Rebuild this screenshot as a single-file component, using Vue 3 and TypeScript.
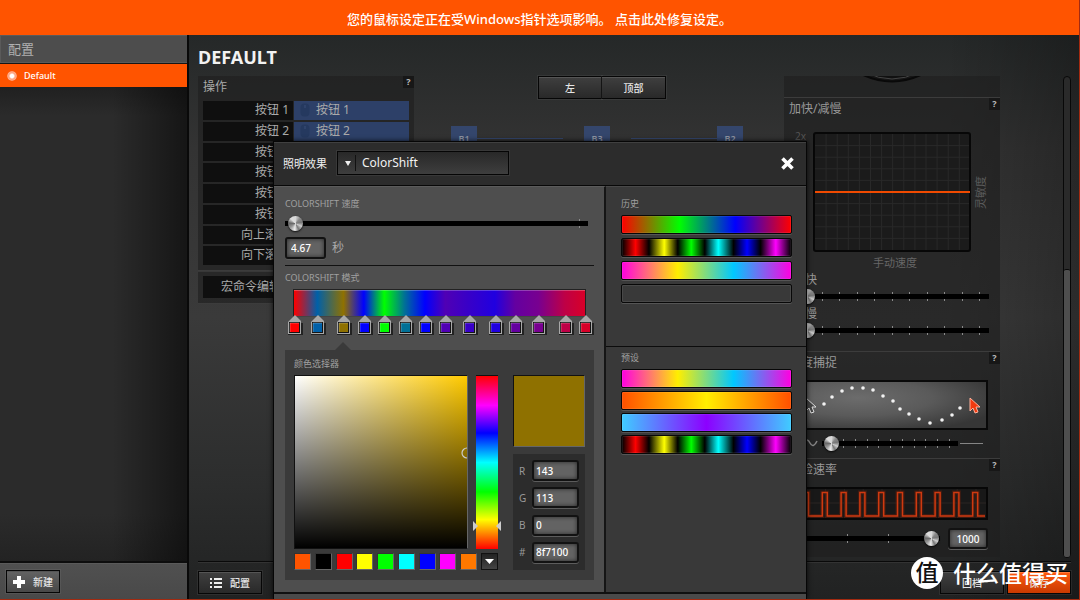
<script setup lang="ts">
import { ref } from 'vue'

interface Binding { label: string; value: string }
interface Stop { at: number; color: string }

const bindings: Binding[] = [
  { label: '按钮 1', value: '按钮 1' },
  { label: '按钮 2', value: '按钮 2' },
  { label: '按钮 3', value: '按钮 3' },
  { label: '按钮 4', value: '按钮 4' },
  { label: '按钮 5', value: '按钮 5' },
  { label: '按钮 6', value: 'CPI 切换' },
  { label: '向上滚动', value: '向上滚动' },
  { label: '向下滚动', value: '向下滚动' },
]

const stops: Stop[] = [
  { at: 0, color: '#ff0000' },
  { at: 8, color: '#0060a8' },
  { at: 17, color: '#8f7100' },
  { at: 24, color: '#0000ff' },
  { at: 31, color: '#00ff00' },
  { at: 38, color: '#007096' },
  { at: 45, color: '#0000ff' },
  { at: 52, color: '#5000b4' },
  { at: 60, color: '#3800c8' },
  { at: 69, color: '#2000e0' },
  { at: 76, color: '#6400a0' },
  { at: 84, color: '#780090' },
  { at: 93, color: '#be0046' },
  { at: 100, color: '#d80028' },
]
const pattern = `linear-gradient(90deg, ${stops.map(s => `${s.color} ${s.at}%`).join(', ')})`

const spectrum = 'linear-gradient(90deg, #ff0000, #00ff00 34%, #0000ff 67%, #ff0000)'
const pulses = 'linear-gradient(90deg, #000, #f00 8%, #000 16%, #ff0 25%, #000 33%, #0f0 41%, #000 49%, #0ff 57%, #000 66%, #00f 74%, #000 82%, #f0f 91%, #000)'
const candy = 'linear-gradient(90deg, #ff00e0, #ffee00 33%, #00c8ff 66%, #ff00e0)'
const sunset = 'linear-gradient(90deg, #ff5000, #ffee00 50%, #ff5000)'
const ocean = 'linear-gradient(90deg, #40ccff, #8c00ff 50%, #40ccff)'
const history = [spectrum, pulses, candy, 'none']
const presets = [candy, sunset, ocean, pulses]

const swatches = ['#ff5400', '#000000', '#ff0000', '#ffff00', '#00ff00', '#00ffff', '#0000ff', '#ff00ff', '#ff7800']

const dots = [
  [36, 24], [44, 17], [54, 11], [64, 8], [75, 8], [85, 10], [95, 16], [105, 21],
  [112, 29], [121, 34], [131, 39], [142, 43], [154, 40], [164, 35], [172, 28],
]
const wave = 'M2 29' + Array.from({ length: 10 }, (_, i) => {
  const x = 15.5 + i * 18.8
  return `H${x}V5.5H${x + 5}V29`
}).join('') + 'H197'

const speed = ref(1)
const seconds = ref('4.67')
const accel = ref(0)
const decel = ref(0)
const snap = ref(2)
const polling = ref(99)
const pollingRate = ref('1000')
const channels = ref([
  { name: 'R', value: '143' },
  { name: 'G', value: '113' },
  { name: 'B', value: '0' },
  { name: '#', value: '8f7100' },
])
</script>

<template>
  <div class="app">
    <button class="banner">您的鼠标设定正在受Windows指针选项影响。 点击此处修复设定。</button>

    <div class="body">
      <aside class="sidebar">
        <h2 class="side-title">配置</h2>
        <button class="profile"><span class="radio-dot"></span>Default</button>
        <div class="side-space"></div>
        <div class="side-foot">
          <button class="btn new-btn">
            <svg width="12" height="12" viewBox="0 0 12 12"><path d="M4 0h4v4h4v4H8v4H4V8H0V4h4z" fill="#fff" /></svg>新建
          </button>
        </div>
      </aside>

      <main class="main">
        <h1>DEFAULT</h1>
        <div class="columns">
          <section class="actions">
            <div class="panel">
              <div class="panel-head"><h3>操作</h3><button class="help">?</button></div>
              <div class="bindings">
                <div v-for="b in bindings" :key="b.label" class="binding">
                  <span class="binding-name">{{ b.label }}</span>
                  <button class="binding-value">
                    <svg width="10" height="14" viewBox="0 0 10 14"><rect x="0.5" y="0.5" width="9" height="13" rx="4" fill="#25395f" /><path d="M5 2v3" stroke="#3a4e78" /></svg>{{ b.value }}
                  </button>
                </div>
              </div>
            </div>
            <div class="panel macro"><button>宏命令编辑器</button></div>
          </section>

          <section class="device">
            <div class="views"><button class="btn">左</button><button class="btn">顶部</button></div>
            <div class="callouts">
              <span class="tag">B1</span><i class="lead"></i><span class="gap"></span>
              <span class="tag">B3</span><span class="gap"></span><i class="lead"></i><span class="tag">B2</span>
            </div>
          </section>

          <section class="settings">
            <div class="panel dial">
              <svg width="72" height="8" viewBox="0 0 72 8"><path d="M5-2Q36 13 67-2" fill="#161616" stroke="#090909" stroke-width="2" /><path d="M9-4Q36 10 63-4" fill="#111" stroke="#444" /></svg>
            </div>
            <div class="panel accel">
              <div class="panel-head"><h3>加快/减慢</h3><button class="help">?</button></div>
              <div class="chart-row">
                <span class="scale">2x</span>
                <svg class="chart" width="158" height="120" viewBox="0 0 158 120">
                  <rect x="1" y="1" width="156" height="118" rx="2" fill="#1b1b1b" stroke="#070707" stroke-width="2" />
                  <path v-for="i in 13" :key="'v' + i" :d="`M${i * 11.1 + 2} 2V118`" stroke="#292929" />
                  <path v-for="i in 9" :key="'h' + i" :d="`M2 ${i * 11.6 + 2}H156`" stroke="#292929" />
                  <path d="M2 60H157" stroke="#f04a00" stroke-width="2" />
                </svg>
                <span class="axis-y">灵敏度</span>
              </div>
              <p class="axis-x">手动速度</p>
              <label for="accel">加快</label>
              <div class="slider ten"><div class="ticks"><i v-for="i in 10" :key="i"></i></div><input id="accel" v-model="accel" type="range"></div>
              <label for="decel">减慢</label>
              <div class="slider ten"><div class="ticks"><i v-for="i in 10" :key="i"></i></div><input id="decel" v-model="decel" type="range"></div>
            </div>
            <div class="panel snap">
              <div class="panel-head"><h3><label for="snap">角度捕捉</label></h3><button class="help">?</button></div>
              <svg class="snap-art" width="200" height="50" viewBox="0 0 200 50">
                <defs><radialGradient id="snapGlow" cx="35%" cy="35%" r="75%"><stop offset="0" stop-color="#6c6c6c" /><stop offset="0.5" stop-color="#5a5a5a" /><stop offset="1" stop-color="#363636" /></radialGradient></defs>
                <rect x="1" y="1" width="198" height="48" fill="url(#snapGlow)" stroke="#090909" stroke-width="2" />
                <circle v-for="(d, i) in dots" :key="i" :cx="d[0]" :cy="d[1]" r="1.8" fill="#f2f2f2" />
                <path d="M18 18v13l3-3 2 5 3-1-2-5h4z" fill="#444" stroke="#ddd" />
                <path d="M182 18v13l3-3 2 5 3-1-2-5h4z" fill="#f23a10" stroke="#ffb29c" />
              </svg>
              <div class="snap-row">
                <svg width="30" height="8" viewBox="0 0 30 8"><path d="M2 4Q5-2 8 4T14 4T20 4T27 2" fill="none" stroke="#858585" stroke-width="1.5" /></svg>
                <div class="slider"><div class="ticks"><i v-for="i in 10" :key="i"></i></div><input id="snap" v-model="snap" type="range"></div>
                <span class="flat"></span>
              </div>
            </div>
            <div class="panel poll">
              <div class="panel-head"><h3><label for="poll">巡检速率</label></h3><button class="help">?</button></div>
              <svg class="poll-art" width="200" height="33" viewBox="0 0 200 33">
                <rect x="1" y="1" width="198" height="31" fill="#181818" stroke="#070707" stroke-width="2" />
                <path v-for="i in 10" :key="i" :d="`M${i * 18.8} 2V31`" stroke="#2b2422" />
                <path d="M2 16H198" stroke="#2b2422" />
                <path :d="wave" fill="none" stroke="#5c1e0c" stroke-width="4" opacity="0.55" />
                <path :d="wave" fill="none" stroke="#cf3a10" stroke-width="1.5" />
              </svg>
              <div class="poll-row">
                <div class="slider"><div class="ticks"><i v-for="i in 3" :key="i"></i></div><input id="poll" v-model="polling" type="range"></div>
                <input v-model="pollingRate" class="field" aria-label="巡检速率">
              </div>
            </div>
          </section>
          <div class="scroll"><div class="scroll-thumb"></div></div>
        </div>
        <footer class="main-foot">
          <button class="btn">
            <svg width="12" height="10" viewBox="0 0 12 10"><path d="M0 1h2M0 5h2M0 9h2M4 1h8M4 5h8M4 9h8" stroke="#eee" stroke-width="2" /></svg>配置
          </button>
          <span class="gap"></span>
          <button class="btn revert">回档</button>
          <button class="btn save">保存</button>
        </footer>
      </main>
    </div>

    <div class="overlay">
      <div class="dialog" role="dialog" aria-label="照明效果">
        <header class="dialog-head">
          <label for="effect">照明效果</label>
          <div class="effect">
            <select id="effect"><option>ColorShift</option></select>
            <span class="effect-arrow"><svg width="6" height="5" viewBox="0 0 6 5"><path d="M0 0h6L3 5z" fill="#eee" /></svg></span>
          </div>
          <span class="gap"></span>
          <button class="close" aria-label="关闭">
            <svg width="13" height="13" viewBox="0 0 13 13"><path d="M1.5 1.5l10 10M11.5 1.5l-10 10" stroke="#fff" stroke-width="3.6" /></svg>
          </button>
        </header>
        <div class="dialog-body">
          <section class="editor">
            <label class="caption" for="speed">COLORSHIFT 速度</label>
            <div class="slider speed"><div class="ticks"><i></i></div><input id="speed" v-model="speed" type="range"></div>
            <div class="seconds"><input id="seconds" v-model="seconds" class="field"><label for="seconds">秒</label></div>
            <h4 class="caption mode">COLORSHIFT 模式</h4>
            <div class="pattern" :style="{ backgroundImage: pattern }">
              <button v-for="(s, i) in stops" :key="i" class="stop" :style="{ left: s.at + '%' }" :aria-label="s.color">
                <svg width="18" height="22" viewBox="0 0 18 22">
                  <path d="M2 8h15v12H2z" fill="#222" />
                  <path d="M9 0l6 6v13H2V7z" fill="#a8a8a8" />
                  <path d="M3 7h11v11H3z" fill="#151515" />
                  <path d="M4 8h9v9H4z" :fill="s.color" />
                  <path d="M4 17V8h9" fill="none" stroke="#fff" stroke-opacity="0.3" />
                </svg>
              </button>
            </div>
            <div class="picker">
              <h4 class="caption">颜色选择器</h4>
              <div class="picker-grid">
                <div class="sv"><svg class="sv-mark" width="6" height="12" viewBox="0 0 6 12"><path d="M6 1A5 5 0 0 0 6 11" fill="none" stroke="#ccc" stroke-width="1.2" /></svg></div>
                <div class="hue">
                  <svg class="hue-mark" width="28" height="10" viewBox="0 0 28 10"><path d="M0 0l5 5-5 5zM28 0l-5 5 5 5z" fill="#ccc" /></svg>
                </div>
                <div class="side">
                  <div class="preview"></div>
                  <div class="channels">
                    <template v-for="c in channels" :key="c.name">
                      <label :for="'ch' + c.name">{{ c.name }}</label>
                      <input :id="'ch' + c.name" v-model="c.value" class="field">
                    </template>
                  </div>
                </div>
                <div class="swatches">
                  <button v-for="c in swatches" :key="c" class="swatch" :style="{ backgroundColor: c }" :aria-label="c"></button>
                  <button class="swatch more" aria-label="更多"><svg width="9" height="5" viewBox="0 0 9 5"><path d="M0 0h9L4.500 5z" fill="#fff" /></svg></button>
                </div>
              </div>
            </div>
          </section>
          <section class="library">
            <div class="lib-group">
              <h4 class="caption">历史</h4>
              <button v-for="(g, i) in history" :key="i" class="gradient" :style="{ backgroundImage: g }" :aria-label="'历史 ' + (i + 1)"></button>
            </div>
            <div class="lib-group">
              <h4 class="caption">预设</h4>
              <button v-for="(g, i) in presets" :key="i" class="gradient" :style="{ backgroundImage: g }" :aria-label="'预设 ' + (i + 1)"></button>
            </div>
          </section>
        </div>
        <div class="dialog-foot"></div>
      </div>
    </div>

    <div class="watermark"><span class="wm-mark">值</span><span>什么值得买</span></div>
  </div>
</template>

<style>
body { margin: 0; background: #222; }
</style>

<style scoped>
.app, .app * { box-sizing: border-box; }
.app {
  position: relative; height: 100vh; overflow: hidden; display: flex; flex-direction: column;
  font: 12px/16px "Noto Sans", "Noto Sans CJK SC", sans-serif; color: #aaa;
  border-right: 1px solid #a32a10; border-bottom: 1px solid #a32a10;
}
h1, h2, h3, h4, p { margin: 0; font: inherit; }
button, input, select { font: inherit; color: inherit; margin: 0; padding: 0; border: 0; background: none; }
svg { display: block; flex: none; }
i { display: block; }
.gap { flex: 1; }

.banner { flex: none; height: 35px; background: #ff5400; color: #fff; font-size: 13px; font-weight: 500; padding-top: 2px; }
.body { flex: 1; min-height: 0; display: grid; grid-template-columns: 189px 1fr; }

.sidebar { display: flex; flex-direction: column; border-right: 2px solid #090909; min-height: 0; }
.side-title { height: 28px; padding: 5px 7px 0; background: #4d4d4d; border: 1px solid #5a5a5a; border-width: 1px 0 1px 1px; font-size: 13px; color: #b0b0b0; line-height: 16px; }
.profile { height: 24px; display: flex; align-items: center; gap: 7px; padding-left: 7px; border-top: 1px solid #161616; background: #ff5400; color: #fff; font-size: 9px; font-weight: 500; }
.radio-dot { width: 10px; height: 10px; border-radius: 50%; background: radial-gradient(circle, #fff 0 25%, #ff9d78 45%, #ffb090 60%, #ff6a24 75%); }
.side-space { flex: 1; background: linear-gradient(90deg, transparent 60%, rgba(0,0,0,.5)), linear-gradient(#202020, #2b2b2b 6%, #2b2b2b 90%, #232323); border-bottom: 2px solid #0d0d0d; }
.side-foot { height: 36px; padding: 6px 6px; background: linear-gradient(#505050, #494949); border-top: 1px solid #5a5a5a; }

.btn {
  height: 23px; display: flex; align-items: center; justify-content: center; gap: 8px;
  border: 1px solid #060606; outline: 1px solid rgba(255,255,255,.06);
  background: linear-gradient(#3f3f3f, #292929); box-shadow: inset 0 1px 0 #555;
  font-size: 10px; font-weight: 500; color: #e6e6e6;
}
.new-btn { width: 54px; background: linear-gradient(#636363, #484848); }

.main {
  min-width: 0; min-height: 0; display: flex; flex-direction: column; padding: 0 8px 0 9px;
  background: linear-gradient(90deg, transparent 85%, rgba(0,0,0,.25)), linear-gradient(#252828, #333 20%, #3a3a3a 50%, #2c2d2d 80%, #212222);
}
h1 { flex: none; height: 41px; padding-top: 11px; font-size: 18px; line-height: 22px; font-weight: 700; color: #f2f2f2; }
.columns { flex: 1; min-height: 0; display: grid; grid-template-columns: 216px 1fr 216px 71px; }
.panel { background: rgba(30,30,30,.62); border-bottom: 1px solid #3c3c3c; }
.panel-head { display: flex; justify-content: space-between; height: 22px; padding-left: 5px; }
.panel-head h3 { padding-top: 3px; font-size: 12px; }
.help { width: 11px; height: 12px; background: #171717; color: #bbb; font-size: 9px; line-height: 12px; font-weight: 700; }

.actions { min-width: 0; }
.actions .panel:first-child { height: 195px; margin-bottom: 1px; }
.bindings { display: grid; grid-auto-rows: 1fr; gap: 2px; height: 164px; margin: 3px 5px 0; }
.binding { display: grid; grid-template-columns: 90px 1fr; gap: 1px; line-height: 16px; }
.binding-name { background: #0f0f0f; text-align: right; padding: 1px 4px 0 0; }
.binding-value { display: flex; align-items: center; gap: 6px; padding-left: 6px; background: #2d4068; }
.macro { padding: 4px 5px 5px; }
.macro button { display: block; width: 100%; height: 22px; background: #0f0f0f; text-align: left; padding-left: 18px; }

.device { min-width: 0; }
.views { display: flex; justify-content: center; padding-left: 6px; }
.views .btn { flex: 0 1 64px; }
.views .btn + .btn { border-left: 0; }
.callouts { display: flex; margin: 27px 41px 0 37px; }
.tag { width: 26px; height: 26px; background: #34466c; color: #8f95a3; font-size: 9px; line-height: 26px; text-align: center; font-weight: 600; }
.lead { width: 86px; height: 1px; margin-top: 12px; background: #34466c; }

.settings { min-width: 0; color: #999; }
.dial { height: 22px; display: flex; justify-content: center; }
.accel { height: 254px; }
.chart-row { display: grid; grid-template-columns: 22px 158px 1fr; gap: 7px; margin-top: 12px; align-items: center; }
.scale { align-self: start; text-align: right; font-size: 10px; line-height: 8px; color: #555; }
.axis-y { writing-mode: vertical-rl; text-orientation: sideways; transform: rotate(180deg); color: #5c5c5c; width: 16px; line-height: 16px; justify-self: start; margin-left: -5px; font-size: 11px; }
.axis-x { text-align: center; font-size: 11px; line-height: 14px; padding: 4px 0 2px 6px; color: #666; }
.accel > label { display: block; line-height: 16px; padding-left: 9px; font-size: 12px; }
.accel .slider { margin: 0 11px 2px 16px; }
.snap { height: 107px; }
.snap-art, .poll-art { margin: 6px 0 0 4px; }
.snap-row { display: grid; grid-template-columns: 30px 136px 23px; gap: 2px; align-items: center; margin: 5px 0 0 6px; }
.flat { height: 1px; background: #858585; }
.poll { height: 98px; border: 0; }
.poll-row { display: flex; align-items: center; gap: 8px; margin: 8px 12px 0 12px; }
.poll-row .slider { flex: 1; }
.poll-row .field { width: 40px; text-align: center; padding: 0; }

.scroll { justify-self: end; width: 8px; border: 1px solid #080808; border-radius: 4px; background: #2a2a2a; display: flex; flex-direction: column; justify-content: flex-end; }
.scroll-thumb { height: 60%; border-top: 1px solid #080808; background: #4e4e4e; border-radius: 2px; }

.main-foot { flex: none; display: flex; gap: 3px; height: 38px; margin-top: 3px; padding-top: 9px; border-top: 1px solid #090909; box-shadow: inset 0 1px 0 #333; }
.main-foot .btn { width: 64px; }
.main-foot .save { background: linear-gradient(#ff5a10, #c93a00); box-shadow: inset 0 1px 0 #ff7a3a; }

.slider { display: grid; align-items: center; height: 16px; }
.slider > * { grid-area: 1 / 1; min-width: 0; }
.slider input { appearance: none; width: 100%; height: 16px; background: linear-gradient(#000, #000) center / 100% 5px no-repeat; }
.slider input::-webkit-slider-thumb {
  appearance: none; width: 15px; height: 15px; border-radius: 50%;
  background: conic-gradient(#d8d8d8, #888 12%, #777 22%, #ccc 32%, #777 42%, #eee 52%, #999 64%, #666 76%, #ddd 88%, #d8d8d8);
  box-shadow: 0 1px 2px rgba(0,0,0,.8);
}
.ticks { display: flex; justify-content: space-between; height: 9px; }
.ticks i { width: 1px; height: 9px; background: #8a8a8a; }
.ten .ticks { padding: 0 9px 0 22px; }
.snap-row .ticks { padding: 0 8px 0 21px; }
.poll-row .ticks { padding: 0 51px 0 9px; }
.speed .ticks { padding-right: 8px; justify-content: flex-end; }

.field {
  width: 46px; height: 21px; padding: 0 0 0 4px; border: 2px solid #121212; border-radius: 3px;
  background: #636363; box-shadow: inset 0 0 4px rgba(0,0,0,.6), 0 1px 0 #5c5c5c;
  color: #fff; font-size: 10px; font-weight: 500;
}

.overlay { position: absolute; inset: 141px -1px 0 0; display: flex; justify-content: center; }
.dialog { width: 534px; max-width: 100%; display: flex; flex-direction: column; border: 1px solid #060606; border-bottom: 0; background: #2c2c2c; box-shadow: 0 0 5px rgba(0,0,0,.8); }
.dialog-head { flex: none; height: 44px; display: flex; align-items: center; gap: 10px; padding: 0 12px 0 9px; color: #f0f0f0; border-bottom: 1px solid #080808; box-shadow: inset 0 1px 0 #404040; font-size: 11px; }
.effect { display: grid; width: 172px; margin-bottom: 1px; }
.effect > * { grid-area: 1 / 1; }
.effect select { appearance: none; height: 24px; padding-left: 24px; border: 1px solid #050505; background: linear-gradient(#282828, #3e3e3e); color: #f2f2f2; font-size: 12px; outline: 1px solid #383838; }
.effect-arrow { pointer-events: none; width: 19px; height: 16px; margin: 4px 0; border-right: 1px solid #111; display: grid; place-items: center; padding-left: 3px; }
.dialog-body { flex: 1; display: grid; grid-template-columns: 332px 1fr; min-height: 0; }
.dialog-foot { height: 7px; flex: none; background: #4a4a4a; border-top: 2px solid #101010; }

.editor { padding: 10px 10px 0 11px; background: #4e4e4e; border-right: 2px solid #151515; border-top: 1px solid #5b5b5b; }
.caption { display: block; font-size: 9px; line-height: 14px; color: #a0a0a0; }
.speed { margin: 4px 6px 0 0; }
.seconds { display: flex; align-items: center; gap: 6px; height: 34px; padding-bottom: 3px; padding-top: 3px; }
.seconds .field { width: 41px; height: 22px; }
.mode { padding-top: 5px; border-top: 1px solid #111; }
.pattern { position: relative; height: 28px; margin: 4px 8px 33px 8px; border: 1px solid #222; border-bottom-color: #444; box-shadow: inset 0 1px 0 rgba(255,255,255,.25); }
.stop { position: absolute; top: 25px; width: 18px; margin-left: -8px; }
.picker { position: relative; padding: 7px 9px 10px; background: #3a3a3a; }
.picker::before { content: ""; position: absolute; left: 50px; bottom: 100%; border: 8px solid transparent; border-top: 0; border-bottom-color: #3a3a3a; }
.picker-grid { display: grid; grid-template-columns: 174px 22px 1fr; column-gap: 8px; row-gap: 4px; margin-top: 4px; }
.sv { position: relative; height: 174px; border: 1px solid #111; border-right-color: #666; background: linear-gradient(transparent, #000), linear-gradient(90deg, #fff, #ffca00); }
.sv-mark { position: absolute; right: 0; top: 71px; }
.hue { position: relative; border-top: 1px solid #111; background: linear-gradient(#f00, #f0f 17%, #00f 33%, #0ff 50%, #0f0 67%, #ff0 83%, #f00); }
.hue-mark { position: absolute; left: -3px; top: 145px; }
.side { grid-column: 3; grid-row: 1 / 3; justify-self: end; width: 72px; display: flex; flex-direction: column; gap: 7px; }
.preview { height: 72px; background: #8f7100; border: 1px solid #111; border-right-color: #666; border-bottom-color: #666; }
.channels { flex: 1; display: grid; grid-template-columns: 13px 47px; align-content: space-between; align-items: center; padding: 6px 6px 7px 6px; background: #2c2c2c; font-size: 10px; color: #999; }
.channels .field { width: 47px; padding-left: 2px; }
.swatches { grid-column: 1 / 3; display: flex; justify-content: space-between; }
.swatch { width: 17px; height: 17px; border: 1px solid #333; border-right-color: #666; border-bottom-color: #666; display: grid; place-items: center; }
.more { background: linear-gradient(#222, #444); border-color: #111; }

.library { background: #393939; border-top: 1px solid #484848; }
.lib-group { padding: 10px 14px 0 15px; min-height: 159px; }
.lib-group + .lib-group { border-top: 1px solid #0c0c0c; padding-top: 4px; }
.library .caption { margin-bottom: 4px; }
.gradient { display: block; width: 100%; height: 19px; margin-bottom: 4px; border: 1px solid #080808; border-radius: 2px; box-shadow: inset 0 0 0 1px rgba(255,255,255,.08), 0 1px 0 #555; }
.lib-group + .lib-group .gradient { margin-bottom: 3px; }

.watermark { position: absolute; right: 11px; bottom: 9px; display: flex; align-items: center; gap: 10px; color: #fff; font-size: 23px; font-weight: 500; line-height: 34px; pointer-events: none; }
.wm-mark { width: 32px; height: 32px; border-radius: 50%; background: #fff; color: #111; line-height: 30px; text-align: center; }
</style>
